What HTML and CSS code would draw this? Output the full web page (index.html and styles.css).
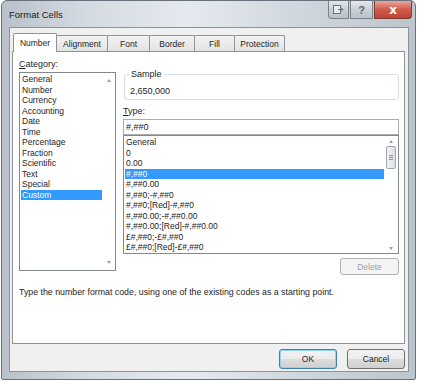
FILE: index.html
```html
<!DOCTYPE html>
<html>
<head>
  <title>Format Cells</title>
  <link rel="stylesheet" href="styles.css">
</head>
<body>
  <!-- Dialog window with frame and caption -->
  <div class="window">
    <div class="titlebar">
      <span class="title">Format Cells</span>
      <div class="caption-btns">
        <div class="cap-btn">
          <svg width="11" height="9" viewBox="0 0 11 9"><rect x="0.5" y="0.5" width="7" height="8" fill="#e8ecf0" stroke="#6a737d"/><path d="M5 4.5h5M8 2.5l2 2-2 2" fill="none" stroke="#6a737d"/></svg>
        </div>
        <div class="cap-btn help">?</div>
        <div class="cap-btn close">x</div>
      </div>
    </div>
    <div class="client">
      <!-- Tab strip -->
      <div class="tabs">
        <div class="tab active">Number</div>
        <div class="tab">Alignment</div>
        <div class="tab">Font</div>
        <div class="tab">Border</div>
        <div class="tab">Fill</div>
        <div class="tab">Protection</div>
      </div>
      <div class="panel">
        <div class="panel-main">
          <!-- Category list -->
          <div class="category">
            <div class="label"><u>C</u>ategory:</div>
            <div class="listbox cat-list">
              <ul>
                <li>General</li>
                <li>Number</li>
                <li>Currency</li>
                <li>Accounting</li>
                <li>Date</li>
                <li>Time</li>
                <li>Percentage</li>
                <li>Fraction</li>
                <li>Scientific</li>
                <li>Text</li>
                <li>Special</li>
                <li class="selected">Custom</li>
              </ul>
              <div class="scrollbar">
                <span class="arrow up"></span>
                <span class="arrow down"></span>
              </div>
            </div>
          </div>
          <!-- Sample, type box and code list -->
          <div class="right">
            <div class="sample">
              <span class="legend">Sample</span>
              <div class="sample-value">2,650,000</div>
            </div>
            <div class="label type-label"><u>T</u>ype:</div>
            <div class="type-input">#,##0</div>
            <div class="listbox type-list">
              <ul>
                <li>General</li>
                <li>0</li>
                <li>0.00</li>
                <li class="selected">#,##0</li>
                <li>#,##0.00</li>
                <li>#,##0;-#,##0</li>
                <li>#,##0;[Red]-#,##0</li>
                <li>#,##0.00;-#,##0.00</li>
                <li>#,##0.00;[Red]-#,##0.00</li>
                <li>£#,##0;-£#,##0</li>
                <li>£#,##0;[Red]-£#,##0</li>
              </ul>
              <div class="scrollbar">
                <span class="arrow up"></span>
                <span class="thumb"><i></i><i></i><i></i></span>
                <span class="arrow down"></span>
              </div>
            </div>
            <div class="delete-row">
              <button class="btn" disabled>Delete</button>
            </div>
          </div>
        </div>
        <p class="hint">Type the number format code, using one of the existing codes as a starting point.</p>
      </div>
      <!-- Dialog buttons -->
      <div class="footer">
        <button class="btn default">OK</button>
        <button class="btn">Cancel</button>
      </div>
    </div>
  </div>
</body>
</html>
```

FILE: styles.css
```css
body {
  margin: 0;
  background: #fff;
  font-family: 'Liberation Sans', Arial, sans-serif;
  font-size: 8.5px;
  color: #1e1e1e;
}
.window {
  margin-left: 1px;
  width: 415px;
  height: 380px;
  border: 1px solid #68717c;
  border-radius: 6px 6px 2px 2px;
  background: linear-gradient(90deg, #b9c1ca 0%, #d4dae1 20%, #e6eaee 45%, #d2d8df 70%, #bcc4cc 100%);
  padding: 0 6px 7px 7px;
  box-sizing: border-box;
  display: flex;
  flex-direction: column;
}
.titlebar {
  height: 26px;
  display: flex;
  align-items: flex-start;
  justify-content: space-between;
  flex-shrink: 0;
}
.title {
  margin-top: 8px;
  font-size: 9.5px;
  color: #1a1a1a;
}
.caption-btns {
  display: flex;
  margin-right: -3px;
}
.cap-btn {
  width: 21px;
  height: 18px;
  border: 1px solid #7b838d;
  border-top: none;
  background: linear-gradient(#e4e8ec, #c9d0d7 50%, #bac2ca);
  display: flex;
  align-items: center;
  justify-content: center;
  box-sizing: border-box;
  margin-left: 1px;
}
.cap-btn:first-child {
  border-radius: 0 0 0 4px;
}
.help {
  color: #5d6670;
  font-weight: bold;
  font-size: 11px;
  width: 23px;
}
.close {
  width: 38px;
  border-color: #7a3b33;
  border-radius: 0 0 4px 0;
  background: linear-gradient(#e9a99f, #cf5b4c 50%, #c0432f);
  color: #fff;
  font-weight: bold;
  font-size: 12px;
  font-family: 'DejaVu Sans', sans-serif;
  line-height: 1;
}
.client {
  flex: 1;
  background: #f0f0f0;
  border: 1px solid #8a939d;
  padding: 4px 3px 0 2px;
  display: flex;
  flex-direction: column;
}
.tabs {
  display: flex;
  height: 19px;
  align-items: flex-end;
  padding-left: 1px;
}
.tab {
  height: 16px;
  padding: 0 6px;
  box-sizing: border-box;
  border: 1px solid #8e929b;
  border-bottom: none;
  border-radius: 2px 2px 0 0;
  background: linear-gradient(#f3f3f3, #e3e3e3);
  display: flex;
  align-items: center;
  justify-content: center;
  margin-right: -1px;
}
.tab.active {
  height: 19px;
  background: #fff;
  position: relative;
  z-index: 1;
  margin-bottom: -1px;
  width: 44px;
}
.tab:nth-child(2) { width: 52px; }
.tab:nth-child(3) { width: 43px; }
.tab:nth-child(4) { width: 46px; }
.tab:nth-child(5) { width: 41px; }
.tab:nth-child(6) { width: 51px; }
.panel {
  height: 293px;
  background: #fff;
  border: 1px solid #8e929b;
  box-sizing: border-box;
  padding: 6px 5px 0 6px;
}
.panel-main {
  display: flex;
  gap: 5px;
}
.label {
  height: 12px;
  line-height: 12px;
  font-size: 9px;
}
.category {
  width: 97px;
}
.category .label {
  margin-bottom: 2px;
}
.listbox {
  border: 1px solid #828790;
  background: #fff;
  display: flex;
  box-sizing: border-box;
}
.listbox ul {
  list-style: none;
  margin: 0;
  padding: 1px 0 0 1px;
  flex: 1;
}
.listbox li {
  height: 10.5px;
  line-height: 10.5px;
  padding-left: 1px;
  white-space: nowrap;
}
.listbox li.selected {
  background: #3399ff;
  color: #fff;
}
.cat-list {
  height: 199px;
}
.scrollbar {
  width: 13px;
  display: flex;
  flex-direction: column;
  align-items: center;
  justify-content: space-between;
  padding: 6px 0;
  box-sizing: border-box;
}
.arrow {
  width: 0;
  height: 0;
  border-left: 2.5px solid transparent;
  border-right: 2.5px solid transparent;
}
.arrow.up {
  border-bottom: 3px solid #9aa0a6;
}
.arrow.down {
  border-top: 3px solid #9aa0a6;
}
.right {
  flex: 1;
  padding-left: 2px;
}
.sample {
  position: relative;
  margin: 16px 0 0 1px;
  height: 26px;
  border: 1px solid #d5dfe5;
  border-radius: 3px;
  box-sizing: border-box;
}
.legend {
  position: absolute;
  top: -6px;
  left: 4px;
  padding: 0 2px;
  background: #fff;
  font-size: 9px;
}
.sample-value {
  padding: 11px 0 0 5px;
  font-size: 9px;
}
.type-label {
  margin-top: 5px;
}
.type-input {
  margin-top: 2px;
  height: 16px;
  border: 1px solid #abadb3;
  box-sizing: border-box;
  padding-left: 2px;
  line-height: 14px;
  font-size: 9px;
}
.type-list {
  height: 119px;
  border-color: #828790;
}
.type-list .scrollbar {
  width: 14px;
  padding: 4px 0 3px;
}
.thumb {
  width: 10px;
  height: 23px;
  margin-top: 3px;
  margin-bottom: auto;
  border: 1px solid #a1a6ad;
  border-radius: 2px;
  background: linear-gradient(90deg, #f3f4f6, #dcdfe3);
  box-sizing: border-box;
  display: flex;
  flex-direction: column;
  align-items: center;
  justify-content: center;
  gap: 1px;
}
.thumb i {
  width: 4px;
  height: 1px;
  background: #8b9096;
}
.delete-row {
  display: flex;
  justify-content: flex-end;
  margin-top: 4px;
}
.btn {
  font-family: 'Liberation Sans', Arial, sans-serif;
  font-size: 8.5px;
  color: #1e1e1e;
  border: 1px solid #707070;
  border-radius: 3px;
  background: linear-gradient(#f2f2f2 0%, #ebebeb 50%, #dddddd 51%, #cfcfcf 100%);
  width: 58px;
  height: 20px;
  padding: 0;
}
.btn:disabled {
  width: 59px;
  height: 17px;
  color: #a0a0a0;
  border-color: #adb2b5;
  background: #f4f4f4;
}
.hint {
  margin: 12px 0 0;
  font-size: 8.8px;
}
.footer {
  display: flex;
  justify-content: flex-end;
  gap: 10px;
  padding-top: 5px;
}
.btn.default {
  border-color: #3c7fb1;
  box-shadow: inset 0 0 0 1px #8fd3f5;
}
```
